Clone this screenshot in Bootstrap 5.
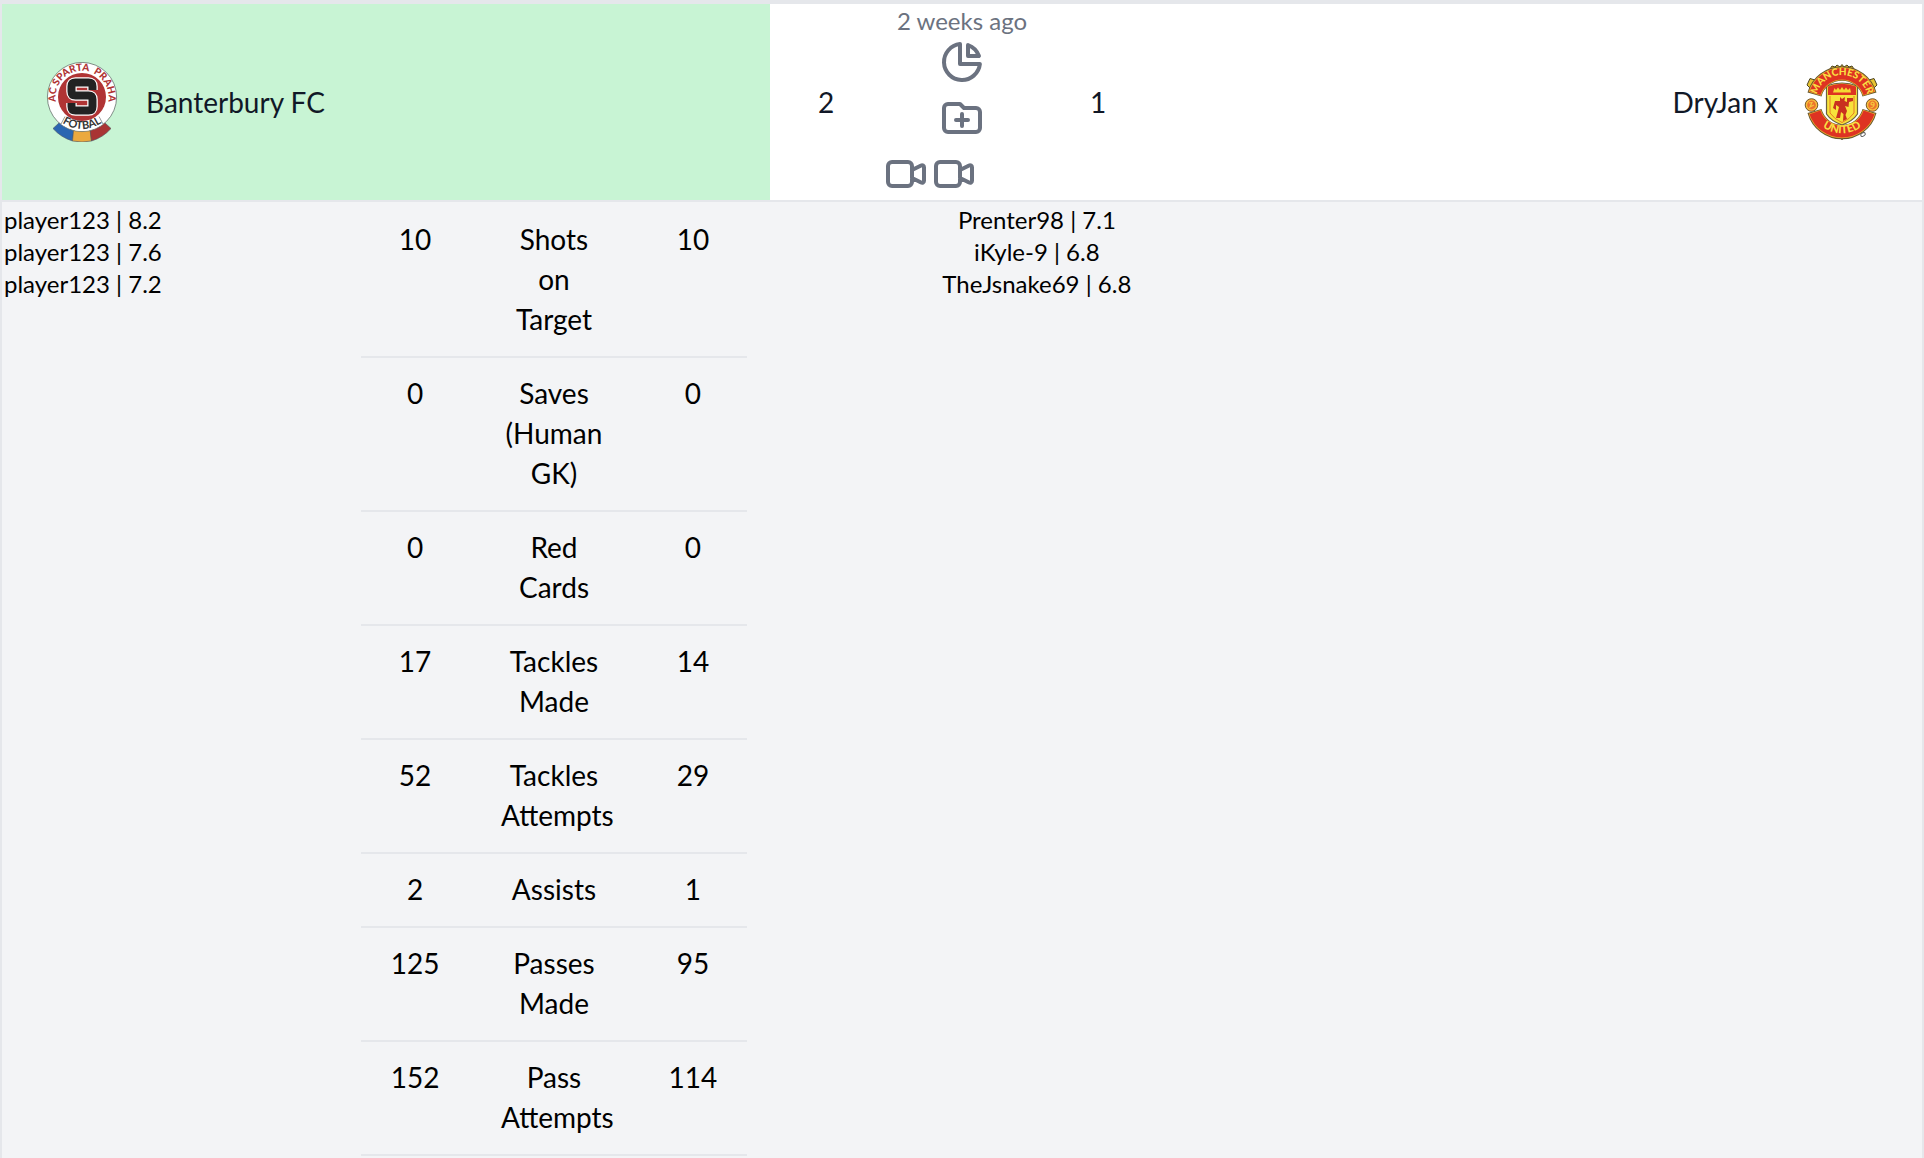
<!DOCTYPE html>
<html lang="en">
<head>
<meta charset="utf-8">
<meta name="viewport" content="width=device-width, initial-scale=1">
<title>Match result</title>
<link href="https://cdn.jsdelivr.net/npm/bootstrap@5.3.0/dist/css/bootstrap.min.css" rel="stylesheet">
<style>
  body { font-family: Lato, "Open Sans", sans-serif; font-size: 28px; line-height: 40px; color: #000; background: #f3f4f6; }
  .match { border: 2px solid #e5e7eb; border-bottom: 0; }
  .match-head { border-top: 2px solid #e5e7eb; border-bottom: 2px solid #e5e7eb; color: #111827; background: #fff; }
  .team { width: 40%; gap: 24px; padding: 0 40px; }
  .team-won { background: #c8f4d4; }
  .middle { width: 20%; }
  .score { flex: 7 1 0; }
  .tools { flex: 10 1 0; color: #6b7280; padding-bottom: 2px; }
  .ago { font-size: 24px; line-height: 34px; white-space: nowrap; }
  .tool { color: inherit; padding: 0; border: 0; background: none; display: block; line-height: 0; }
  .tool svg { width: 48px; height: 48px; fill: none; stroke: currentColor; stroke-width: 2; stroke-linecap: round; stroke-linejoin: round; }
  .crest { width: 80px; height: 80px; flex: none; }
  .match-body { padding-top: 2px; }
  .ratings { font-size: 24px; line-height: 32px; }
  .ratings-home { width: 18.7%; padding-left: 2px; }
  .ratings-away { width: 30.2%; }
  .stats { width: 20.1%; table-layout: fixed; text-align: center; }
  .stats tr { border-bottom: 2px solid #e5e7eb; }
  .stats td, .stats th { padding: 15px 0 17px; font-weight: 400; vertical-align: top; }
  .stats th { padding: 15px 32px 17px; }
</style>
</head>
<body>
<main class="match d-flex flex-column min-vh-100">
  <header class="match-head d-flex align-items-stretch">
    <div class="team team-won d-flex align-items-center">
      <svg class="crest" viewBox="0 0 80 80" role="img" aria-label="AC Sparta Praha">
        <defs>
          <path id="sTop" d="M18 50A26.500 26.500 0 1 1 62 50"/>
          <path id="sLow" d="M16 58Q40 76 64 58"/>
        </defs>
        <path d="M17.500 60.500L11 66.500Q19 75.500 30.500 79L32 68Z" fill="#2a66b1" stroke="#4b5360" stroke-width=".6"/>
        <path d="M31.500 68L30.500 79Q40 81 49.500 79L48.500 68Z" fill="#eba93f" stroke="#4b5360" stroke-width=".6"/>
        <path d="M62.500 60.500L69 66.500Q61 75.500 49.500 79L48 68Z" fill="#a93434" stroke="#4b5360" stroke-width=".6"/>
        <circle cx="40" cy="35" r="34.600" fill="#fff" stroke="#66706c" stroke-width=".8"/>
        <circle cx="40" cy="35" r="24" fill="#b03434"/>
        <path d="M19 62L23 54.500Q40 64 57 54.500L61 62Q40 76 19 62Z" fill="#fff"/>
        <path d="M19 62L23 54.500M61 62L57 54.500" stroke="#555" stroke-width=".6"/>
        <path d="M50.500 28V24.500Q50.500 20.500 46.500 20.500H33.500Q29.500 20.500 29.500 24.500V29.500Q29.500 33.500 33.500 33.500H46.500Q50.500 33.500 50.500 37.500V44.500Q50.500 48.500 46.500 48.500H33.500Q29.500 48.500 29.500 44.500V41" fill="none" stroke="#fff" stroke-width="10.500"/>
        <path d="M50.500 28V24.500Q50.500 20.500 46.500 20.500H33.500Q29.500 20.500 29.500 24.500V29.500Q29.500 33.500 33.500 33.500H46.500Q50.500 33.500 50.500 37.500V44.500Q50.500 48.500 46.500 48.500H33.500Q29.500 48.500 29.500 44.500V41" fill="none" stroke="#222" stroke-width="8"/>
        <text font-family="Lato, sans-serif" font-weight="900" font-size="10" fill="#b03434"><textPath href="#sTop" startOffset="50%" text-anchor="middle">AC  SPARTA &#160;PRAHA</textPath></text>
        <text font-family="Lato, sans-serif" font-weight="700" font-size="11" fill="#333"><textPath href="#sLow" startOffset="50%" text-anchor="middle">FOTBAL</textPath></text>
      </svg>
      <span>Banterbury FC</span>
    </div>
    <div class="middle d-flex align-items-center text-center">
      <div class="score">2</div>
      <div class="tools d-flex flex-column align-items-center gap-2">
        <div>
          <div class="ago">2 weeks ago</div>
          <button class="tool mx-auto" type="button" aria-label="Statistics"><svg viewBox="0 0 24 24"><path d="M11 3.055A9.001 9.001 0 1020.945 13H11V3.055z"/><path d="M20.488 9H15V3.512A9.025 9.025 0 0120.488 9z"/></svg></button>
        </div>
        <button class="tool" type="button" aria-label="Add to folder"><svg viewBox="0 0 24 24"><path d="M9 13h6m-3-3v6m-9 1V7a2 2 0 012-2h6l2 2h6a2 2 0 012 2v8a2 2 0 01-2 2H5a2 2 0 01-2-2z"/></svg></button>
        <div class="d-flex align-self-start">
          <a class="tool" href="#" aria-label="Home video"><svg viewBox="0 0 24 24"><path d="M15 10l4.553-2.276A1 1 0 0121 8.618v6.764a1 1 0 01-1.447.894L15 14M5 18h8a2 2 0 002-2V8a2 2 0 00-2-2H5a2 2 0 00-2 2v8a2 2 0 002 2z"/></svg></a>
          <a class="tool" href="#" aria-label="Away video"><svg viewBox="0 0 24 24"><path d="M15 10l4.553-2.276A1 1 0 0121 8.618v6.764a1 1 0 01-1.447.894L15 14M5 18h8a2 2 0 002-2V8a2 2 0 00-2-2H5a2 2 0 00-2 2v8a2 2 0 002 2z"/></svg></a>
        </div>
      </div>
      <div class="score">1</div>
    </div>
    <div class="team d-flex align-items-center justify-content-end">
      <span>DryJan x</span>
      <svg class="crest" viewBox="0 0 80 80" role="img" aria-label="Manchester United">
        <defs>
          <path id="uTop" d="M14 39A26 26 0 0 1 66 39"/>
          <path id="uLow" d="M10 52A33 33 0 0 0 70 52"/>
        </defs>
        <g fill="#e8c531" stroke="#4c4324" stroke-width="1">
          <path d="M28 7L30 4L33 5L35 3L38 5L40 2.500L42 5L45 3L47 5L50 4L52 7L50 10H30Z"/>
          <path d="M29 73L33 76L36 75L40 77.500L44 75L47 76L51 73Z"/>
          <path d="M5 23L8 16.500L13 18L9 27ZM75 23L72 16.500L67 18L71 27Z"/>
        </g>
        <path d="M24.500 24Q40 18 55.500 24V52Q51 59 40 63Q29 59 24.500 52Z" fill="#f7e23b" stroke="#6c6240" stroke-width="1.200"/>
        <path d="M26 24.500Q40 19 54 24.500V33H26Z" fill="#de3322"/>
        <path d="M31 30.500L32.500 26L34 28L36 25.500L38 28L40 25L42 28L44 25.500L46 28L48 26L49 30.500Z" fill="#f5d832"/>
        <path d="M28 34V51Q32 57 40 60.500Q48 57 52 51V34" fill="none" stroke="#e77b24" stroke-width="1"/>
        <path d="M38 35L40 37L43 35L42.500 39L45 40V36H51V39L47 40L46.500 45L43 44L45 49L43.500 53L45 57L41 59L41.500 52L39 50L38 56L34 56L36 49L37 45L34 43L34 48L31 46L33 39L38 39Z" fill="#c9301f"/>
        <path d="M12.500 32.500A28.500 28.500 0 0 1 67.500 32.500" fill="none" stroke="#65552e" stroke-width="14.500"/>
        <path d="M12.800 31.700A28.500 28.500 0 0 1 67.200 31.700" fill="none" stroke="#e9a82c" stroke-width="13"/>
        <path d="M13 31.200A28.500 28.500 0 0 1 67 31.200" fill="none" stroke="#de3322" stroke-width="11.500"/>
        <path d="M12.500 49A28.500 28.500 0 0 0 67.500 49" fill="none" stroke="#65552e" stroke-width="14.500"/>
        <path d="M12.800 49.800A28.500 28.500 0 0 0 67.200 49.800" fill="none" stroke="#e9a82c" stroke-width="13"/>
        <path d="M13 50.300A28.500 28.500 0 0 0 67 50.300" fill="none" stroke="#de3322" stroke-width="11.500"/>
        <g fill="#ed742c" stroke="#766331" stroke-width="1"><circle cx="9.500" cy="43" r="6.300"/><circle cx="70.500" cy="43" r="6.300"/></g>
        <g fill="none" stroke="#f5c63c" stroke-width="1.200"><circle cx="9.500" cy="43" r="5"/><circle cx="70.500" cy="43" r="5"/><path d="M7 41L10 40.500L8 45L12 43M68.500 46Q73 45 72 41Q69 39 69 42Q71 44 72 42"/></g>
        <g font-family="Lato, sans-serif" font-weight="900" fill="#f8df42">
          <text font-size="10"><textPath href="#uTop" startOffset="50%" text-anchor="middle">MANCHESTER</textPath></text>
          <text font-size="11"><textPath href="#uLow" startOffset="50%" text-anchor="middle">UNITED</textPath></text>
        </g>
        <ellipse cx="61" cy="72.500" rx="2.500" ry="1.600" transform="rotate(-30 61 72.500)" fill="none" stroke="#555" stroke-width=".9"/>
      </svg>
    </div>
  </header>
  <div class="match-body d-flex align-items-start">
    <ul class="ratings ratings-home list-unstyled mb-0">
      <li>player123 | 8.2</li>
      <li>player123 | 7.6</li>
      <li>player123 | 7.2</li>
    </ul>
    <table class="stats">
      <colgroup><col style="width:28%"><col style="width:44%"><col style="width:28%"></colgroup>
      <tbody>
        <tr><td>10</td><th scope="row">Shots on Target</th><td>10</td></tr>
        <tr><td>0</td><th scope="row">Saves (Human GK)</th><td>0</td></tr>
        <tr><td>0</td><th scope="row">Red Cards</th><td>0</td></tr>
        <tr><td>17</td><th scope="row">Tackles Made</th><td>14</td></tr>
        <tr><td>52</td><th scope="row">Tackles Attempts</th><td>29</td></tr>
        <tr><td>2</td><th scope="row">Assists</th><td>1</td></tr>
        <tr><td>125</td><th scope="row">Passes Made</th><td>95</td></tr>
        <tr><td>152</td><th scope="row">Pass Attempts</th><td>114</td></tr>
      </tbody>
    </table>
    <ul class="ratings ratings-away list-unstyled mb-0 text-center">
      <li>Prenter98 | 7.1</li>
      <li>iKyle-9 | 6.8</li>
      <li>TheJsnake69 | 6.8</li>
    </ul>
  </div>
</main>
<script src="https://cdn.jsdelivr.net/npm/bootstrap@5.3.0/dist/js/bootstrap.bundle.min.js"></script>
</body>
</html>
